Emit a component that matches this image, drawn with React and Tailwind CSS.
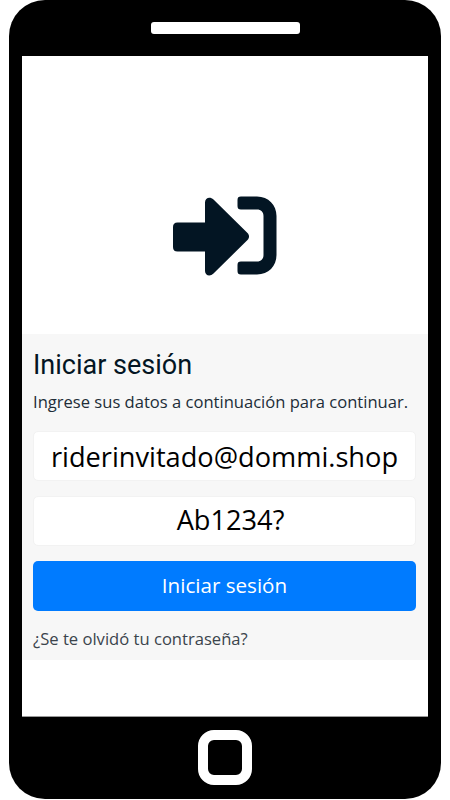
import React, { useState } from 'react';

const LoginIcon = () => (
  <svg width="104" height="80" viewBox="0 0 104 80" fill="#031523">
    <path d="M4.5 26.5H32V6.500C32 1.800 37 0.300 40.500 3.500L74.500 37C76.500 39 76.500 42 74.500 44L40.500 77.500C37 81 32 79.500 32 75V55.500H4.500C1.500 55.500 0 54 0 51V31C0 28 1.500 26.500 4.500 26.500Z" />
    <path d="M68 0.500H84C95.500 0.500 103.500 9 103.500 20V59C103.500 70 95.500 78.500 84 78.500H68C65.500 78.500 64.500 77.500 64.500 75V69C64.500 66.500 65.500 65.500 68 65.500H84C88 65.500 90.500 63 90.500 59V20C90.500 16 88 13.500 84 13.500H68C65.500 13.500 64.500 12.500 64.500 10V4C64.500 1.500 65.500 0.500 68 0.500Z" />
  </svg>
);

const LoginForm = () => {
  const [email, setEmail] = useState('riderinvitado@dommi.shop');
  const [password, setPassword] = useState('Ab1234?');

  return (
    <form
      onSubmit={(e) => e.preventDefault()}
      className="h-[326px] bg-[#f7f7f7] pl-[11px] pr-[12px] pt-[14px] flex flex-col"
    >
      <h1 className="font-['Roboto',sans-serif] text-[27px] leading-[34px] text-[#031523]">Iniciar sesión</h1>
      <p className="mt-2 text-[16.57px] leading-[24px] whitespace-nowrap text-[#212d38]">
        Ingrese sus datos a continuación para continuar.
      </p>
      <input
        type="text"
        value={email}
        onChange={(e) => setEmail(e.target.value)}
        className="mt-[17px] h-[50px] w-full rounded-[5px] border border-[#f2f2f2] bg-white pt-px text-center text-[27.2px] text-black outline-none"
      />
      <input
        type="text"
        value={password}
        onChange={(e) => setPassword(e.target.value)}
        className="mt-[15px] h-[50px] w-full rounded-[5px] border border-[#f2f2f2] bg-white pb-[3px] pl-[12px] text-center text-[27.2px] text-black outline-none"
      />
      <button
        type="submit"
        className="mt-[15px] h-[50px] w-full rounded-[5px] bg-[#007bff] pb-[2px] text-[20.6px] text-white"
      >
        Iniciar sesión
      </button>
      <a href="#" className="mt-4 self-start text-[16.6px] leading-[24px] text-[#3b444c]">
        ¿Se te olvidó tu contraseña?
      </a>
    </form>
  );
};

const App = () => {
  return (
    <div className="h-[800px] w-[450px] bg-white pl-[9px] font-['Open_Sans',sans-serif]">
      <div className="flex h-[799px] w-[432px] flex-col rounded-[36px] bg-black px-[13px]">
        {/* Altavoz */}
        <div className="flex h-[56px] shrink-0 items-center justify-center">
          <div className="h-[12px] w-[149px] rounded-[3px] bg-white" />
        </div>
        {/* Pantalla */}
        <div className="h-[661px] w-[406px] shrink-0 border-b border-[#999999] bg-white">
          <div className="flex h-[278px] justify-center pt-[140px] pr-[1px]">
            <LoginIcon />
          </div>
          <LoginForm />
        </div>
        {/* Botón de inicio */}
        <div className="flex justify-center pt-[13px]">
          <div className="h-[55px] w-[54px] rounded-[16px] border-[10px] border-white" />
        </div>
      </div>
    </div>
  );
};

export default App;
